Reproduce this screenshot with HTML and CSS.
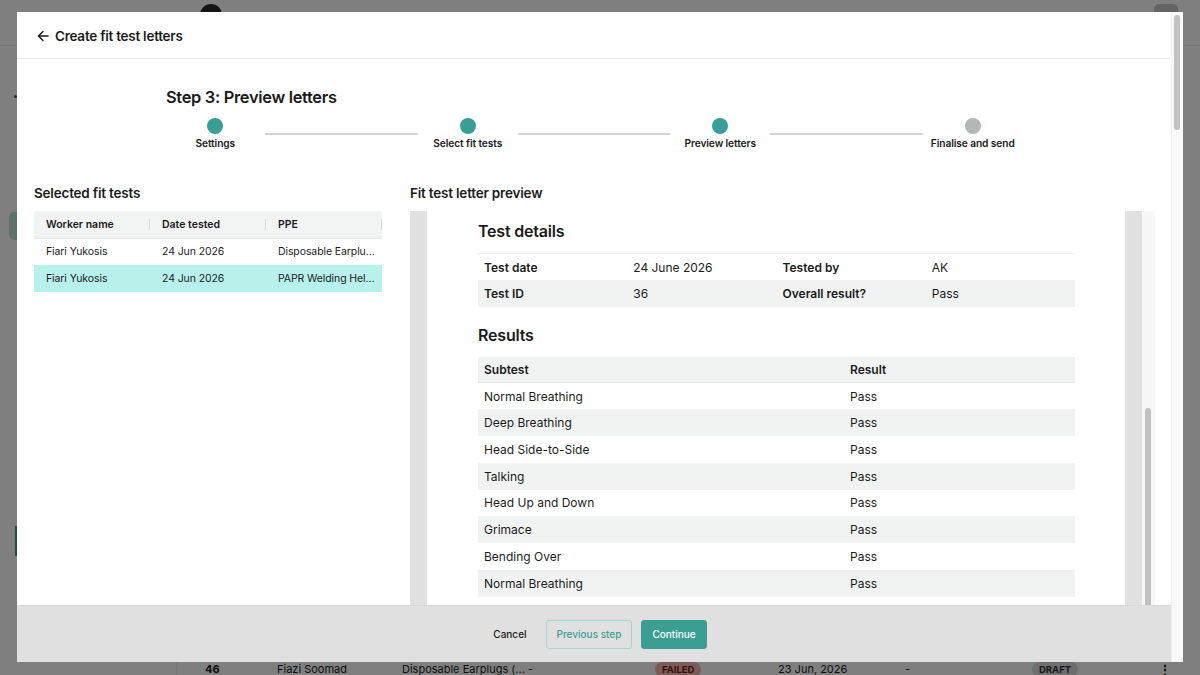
FILE: index.html
```html
<!DOCTYPE html>
<html lang="en">
<head>
    <meta charset="UTF-8">
    <meta name="viewport" content="width=device-width, initial-scale=1.0">
    <title>Create fit test letters</title>
    <link rel="stylesheet" href="styles.css">
</head>
<body>

<!-- page behind the dialog -->
<div class="app">
    <header class="app-top">
        <span class="app-avatar"></span>
        <span class="app-menu"></span>
    </header>
    <div class="app-main">
        <aside class="app-side">
            <span class="side-dot"></span>
            <span class="side-item active"></span>
            <span class="side-line"></span>
        </aside>
        <main class="app-content">
            <div class="list-row">
                <span class="cell num">46</span>
                <span class="cell">Fiazi Soomad</span>
                <span class="cell">Disposable Earplugs (...</span>
                <span class="cell">-</span>
                <span class="cell"><span class="pill failed">FAILED</span></span>
                <span class="cell">23 Jun, 2026</span>
                <span class="cell">-</span>
                <span class="cell"><span class="pill draft">DRAFT</span></span>
                <span class="cell kebab">&#8942;</span>
            </div>
        </main>
    </div>
</div>

<div class="overlay">
    <div class="modal">
        <div class="modal-inner">
            <div class="modal-header">
                <svg class="back-icon" width="12" height="12" viewBox="0 0 12 12" fill="none" stroke="#1b1b1b" stroke-width="1.5" stroke-linecap="round" stroke-linejoin="round">
                    <path d="M11 6H1.5"/>
                    <path d="M6 1.5L1.5 6L6 10.5"/>
                </svg>
                <span>Create fit test letters</span>
            </div>

            <section class="steps">
                <h2 class="steps-title">Step 3: Preview letters</h2>
                <ol class="stepper">
                    <li class="step done"><span class="step-dot"></span><span class="step-label">Settings</span></li>
                    <li class="step done"><span class="step-dot"></span><span class="step-label">Select fit tests</span></li>
                    <li class="step done"><span class="step-dot"></span><span class="step-label">Preview letters</span></li>
                    <li class="step"><span class="step-dot"></span><span class="step-label">Finalise and send</span></li>
                </ol>
            </section>

            <div class="modal-body">
                <div class="panel">
                    <h3 class="panel-title">Selected fit tests</h3>
                    <table class="tests">
                        <thead>
                            <tr>
                                <th>Worker name</th>
                                <th>Date tested</th>
                                <th>PPE</th>
                            </tr>
                        </thead>
                        <tbody>
                            <tr>
                                <td>Fiari Yukosis</td>
                                <td>24 Jun 2026</td>
                                <td>Disposable Earplugs</td>
                            </tr>
                            <tr class="selected">
                                <td>Fiari Yukosis</td>
                                <td>24 Jun 2026</td>
                                <td>PAPR Welding Helmet</td>
                            </tr>
                        </tbody>
                    </table>
                </div>

                <div class="panel">
                    <h3 class="panel-title">Fit test letter preview</h3>
                    <div class="preview">
                        <div class="letter">
                            <h4 class="letter-heading">Test details</h4>
                            <table class="details">
                                <tr>
                                    <th>Test date</th>
                                    <td>24 June 2026</td>
                                    <th>Tested by</th>
                                    <td>AK</td>
                                </tr>
                                <tr>
                                    <th>Test ID</th>
                                    <td>36</td>
                                    <th>Overall result?</th>
                                    <td>Pass</td>
                                </tr>
                            </table>

                            <h4 class="letter-heading results-heading">Results</h4>
                            <table class="results">
                                <thead>
                                    <tr><th>Subtest</th><th>Result</th></tr>
                                </thead>
                                <tbody>
                                    <tr><td>Normal Breathing</td><td>Pass</td></tr>
                                    <tr><td>Deep Breathing</td><td>Pass</td></tr>
                                    <tr><td>Head Side-to-Side</td><td>Pass</td></tr>
                                    <tr><td>Talking</td><td>Pass</td></tr>
                                    <tr><td>Head Up and Down</td><td>Pass</td></tr>
                                    <tr><td>Grimace</td><td>Pass</td></tr>
                                    <tr><td>Bending Over</td><td>Pass</td></tr>
                                    <tr><td>Normal Breathing</td><td>Pass</td></tr>
                                </tbody>
                            </table>
                        </div>
                        <div class="preview-gutter"></div>
                        <div class="preview-scroll"><span class="preview-thumb"></span></div>
                    </div>
                </div>
            </div>

            <div class="modal-footer">
                <button class="btn btn-text">Cancel</button>
                <button class="btn btn-outline">Previous step</button>
                <button class="btn btn-primary">Continue</button>
            </div>
        </div>
        <div class="modal-scroll"><span class="modal-thumb"></span></div>
    </div>
</div>

</body>
</html>
```

FILE: styles.css
```css
* {
    box-sizing: border-box;
}

html, body {
    margin: 0;
    padding: 0;
    height: 100%;
}

body {
    font-family: 'Inter', 'Noto Sans', sans-serif;
    color: #1b1b1b;
    overflow: hidden;
    background: #ffffff;
}

/* ---------- page behind ---------- */

.app {
    height: 100vh;
    display: flex;
    flex-direction: column;
    overflow: hidden;
}

.app-top {
    height: 46px;
    flex: none;
    border-bottom: 1px solid #ececec;
    display: flex;
    align-items: flex-start;
    padding: 4px 22px 0 200px;
}

.app-avatar {
    width: 22px;
    height: 22px;
    border-radius: 50%;
    background: #2a2a2a;
}

.app-menu {
    margin-left: auto;
    width: 24px;
    height: 20px;
    border-radius: 5px;
    background: #c9c9c9;
}

.app-main {
    flex: 1;
    display: flex;
    min-height: 0;
}

.app-side {
    width: 177px;
    flex: none;
    border-right: 1px solid #ececec;
    display: flex;
    flex-direction: column;
    padding-top: 49px;
}

.side-dot {
    width: 3px;
    height: 3px;
    margin-left: 14px;
    border-radius: 50%;
    background: #555;
}

.side-item {
    height: 28px;
    margin: 114px 0 0 9px;
    border-radius: 5px;
    background: #bde3dd;
}

.side-line {
    height: 30px;
    margin: 286px 0 0 15px;
    width: 6px;
    background: #3a9e94;
}

.app-content {
    flex: 1;
    display: flex;
    flex-direction: column;
    justify-content: flex-end;
}

.list-row {
    display: grid;
    grid-template-columns: 100px 125px 126px 127px 123px 127px 127px 126px 1fr;
    align-items: center;
    height: 26px;
    margin-bottom: -7px;
    font-size: 11px;
}

.cell {
    white-space: nowrap;
}

.cell.num {
    font-weight: 700;
    padding-left: 28px;
}

.pill {
    display: inline-block;
    padding: 2px 7px;
    border-radius: 10px;
    font-size: 9.5px;
    font-weight: 700;
}

.pill.failed {
    background: #f8b5b0;
    color: #6e1d1d;
}

.pill.draft {
    background: #dcdcdc;
    color: #333;
}

.kebab {
    font-weight: 700;
    font-size: 14px;
}

/* ---------- dialog ---------- */

.overlay {
    position: fixed;
    inset: 0;
    background: rgba(0, 0, 0, 0.5);
    padding: 12px 17px 13px 17px;
    display: flex;
}

.modal {
    flex: 1;
    display: flex;
    background: #ffffff;
    overflow: hidden;
}

.modal-inner {
    flex: 1;
    display: flex;
    flex-direction: column;
    min-width: 0;
}

.modal-scroll {
    width: 12px;
    flex: none;
    background: #f9f9f9;
    border-left: 1px solid #efefef;
    padding: 3px 0 0 2px;
}

.modal-thumb {
    display: block;
    width: 6px;
    height: 115px;
    border-radius: 3px;
    background: #c1c1c1;
}

.modal-header {
    height: 47px;
    flex: none;
    display: flex;
    align-items: center;
    gap: 6px;
    padding: 1px 0 0 20px;
    border-bottom: 1px solid #ececec;
    font-size: 13.5px;
    font-weight: 600;
    letter-spacing: -0.25px;
}

.back-icon {
    display: block;
}

/* stepper */

.steps {
    flex: none;
    padding-top: 27px;
}

.steps-title {
    max-width: 856px;
    margin: 0 auto 10px;
    font-size: 16.4px;
    line-height: 22px;
    font-weight: 600;
    letter-spacing: -0.3px;
}

.stepper {
    list-style: none;
    margin: 0 auto;
    padding: 0;
    width: 1010px;
    display: flex;
}

.step {
    flex: 1;
    position: relative;
    display: flex;
    flex-direction: column;
    align-items: center;
}

.step + .step::before {
    content: '';
    position: absolute;
    top: 15px;
    left: calc(-50% + 50px);
    right: calc(50% + 50px);
    height: 2px;
    background: #d4d4d4;
}

.step-dot {
    width: 16px;
    height: 16px;
    border-radius: 50%;
    background: #b2b7b7;
}

.step.done .step-dot {
    background: #3a9e94;
}

.step-label {
    margin-top: 2px;
    font-size: 10.2px;
    line-height: 14px;
    font-weight: 600;
    letter-spacing: -0.1px;
}

/* body */

.modal-body {
    flex: 1;
    min-height: 0;
    display: grid;
    grid-template-columns: 348px 745px;
    gap: 28px;
    padding: 34px 16px 0 17px;
}

.panel {
    display: flex;
    flex-direction: column;
    min-height: 0;
}

.panel-title {
    margin: 0 0 9px;
    font-size: 13.5px;
    line-height: 18px;
    font-weight: 600;
    letter-spacing: -0.2px;
}

.tests {
    width: 100%;
    border-collapse: collapse;
    table-layout: fixed;
    font-size: 10.5px;
}

.tests th,
.tests td {
    height: 27px;
    padding: 0 6px 0 12px;
    text-align: left;
    white-space: nowrap;
    overflow: hidden;
    text-overflow: ellipsis;
}

.tests td {
    letter-spacing: -0.1px;
}

.tests th {
    background: #f2f3f3;
    font-weight: 600;
    border-bottom: 1px solid #e6e6e6;
    position: relative;
}

.tests th::after {
    content: '';
    position: absolute;
    right: 0;
    top: 8px;
    height: 11px;
    width: 1px;
    background: #d6d6d6;
}

.tests tr.selected td {
    background: #b8f1ec;
}

/* preview */

.preview {
    flex: 1;
    min-height: 0;
    display: flex;
    background: #e1e1e1;
    padding-left: 17px;
    overflow: hidden;
}

.letter {
    width: 698px;
    flex: none;
    background: #ffffff;
    padding: 10px 50px 0 51px;
    overflow: hidden;
}

.preview-gutter {
    width: 17px;
    flex: none;
}

.preview-scroll {
    flex: 1;
    background: #f7f7f7;
    padding: 197px 0 0 3px;
}

.preview-thumb {
    display: block;
    width: 6px;
    height: 300px;
    border-radius: 3px;
    background: #c1c1c1;
}

.letter-heading {
    margin: 0 0 12px;
    font-size: 16px;
    line-height: 20px;
    font-weight: 600;
    letter-spacing: -0.2px;
}

.results-heading {
    margin-top: 18px;
}

.details,
.results {
    width: 100%;
    border-collapse: collapse;
    font-size: 12px;
}

.details th,
.details td,
.results th,
.results td {
    padding: 0 6px;
    text-align: left;
    white-space: nowrap;
}

.details {
    table-layout: fixed;
}

.details tr {
    height: 26.5px;
}

.details tr:first-child {
    border-top: 1px solid #f1f1f1;
}

.details tr:nth-child(2) {
    background: #f1f2f2;
}

.details th {
    font-weight: 600;
}

.results th:first-child,
.results td:first-child {
    width: 366px;
}

.results thead tr {
    height: 26px;
    background: #f1f2f2;
    border-bottom: 1px solid #e8e8e8;
}

.results th {
    font-weight: 600;
}

.results tbody tr {
    height: 26.75px;
}

.results tbody tr:nth-child(even) {
    background: #f1f2f2;
}

/* footer */

.modal-footer {
    height: 57px;
    flex: none;
    display: flex;
    align-items: center;
    justify-content: center;
    gap: 9px;
    background: #e0e0e0;
    border-top: 1px solid #d9d9d9;
}

.btn {
    height: 29px;
    padding: 0 10px;
    border-radius: 3px;
    font-family: inherit;
    font-size: 10px;
    font-weight: 500;
    cursor: pointer;
}

.btn-text {
    background: none;
    border: none;
    color: #1b1b1b;
    padding: 0 10px 0 13px;
}

.btn-outline {
    background: transparent;
    border: 1px solid #a6d5cf;
    color: #3e9f94;
}

.btn-primary {
    background: #3a9e93;
    border: 1px solid #3a9e93;
    color: #ffffff;
    margin-right: 1px;
}
```
